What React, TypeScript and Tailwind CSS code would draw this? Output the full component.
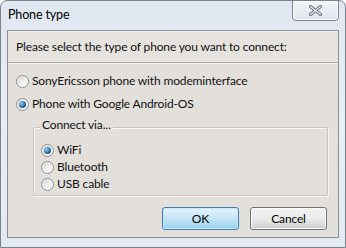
import React from "react";

function Radio({ checked }: { checked?: boolean }) {
  return (
    <span className="relative inline-flex w-[13px] h-[13px] shrink-0 rounded-full border border-[#8e8f8f] bg-gradient-to-br from-[#c9c9c9] via-[#eeeeee] to-[#ffffff] items-center justify-center shadow-[inset_0_0_0_1px_#f4f4f4]">
      {checked && (
        <span className="w-[7px] h-[7px] rounded-full bg-[radial-gradient(circle_at_35%_35%,#9fd3f2_0%,#2a6a9c_55%,#123d63_100%)]" />
      )}
    </span>
  );
}

function Option({ label, checked }: { label: string; checked?: boolean }) {
  return (
    <div className="flex items-center gap-[3px] h-[16px]">
      <Radio checked={checked} />
      <span className="leading-none">{label}</span>
    </div>
  );
}

export default function App() {
  return (
    <div
      className="relative w-[346px] h-[248px] overflow-hidden rounded-t-[7px] border border-[#7b828c] bg-gradient-to-b from-[#dfe7f0] via-[#e9eef5] to-[#e3e9f2] text-[12px] tracking-[-0.15px] text-[#111]"
      style={{ fontFamily: 'Lato, "Noto Sans", sans-serif' }}
    >
      <div className="h-[29px] flex items-center pl-[7px] text-[12.5px] text-black">
        Phone type
      </div>
      <div className="absolute right-[6px] top-[-1px] w-[47px] h-[21px] rounded-b-[4px] border border-[#7d8590] bg-gradient-to-b from-[#f2f5f9] to-[#dfe5ed] flex items-center justify-center shadow-[inset_0_0_0_1px_#fbfcfe]">
        <svg width="13" height="11" viewBox="0 0 13 11">
          <path
            d="M1.5 1.5 L11.5 9.5 M11.5 1.5 L1.5 9.5"
            stroke="#5f6670"
            strokeWidth="3"
            strokeLinecap="round"
          />
          <path
            d="M1.5 1.5 L11.5 9.5 M11.5 1.5 L1.5 9.5"
            stroke="#f4f6f8"
            strokeWidth="1.2"
            strokeLinecap="round"
          />
        </svg>
      </div>
      <div className="mx-[6px] h-[208px] border border-[#8a8f96] bg-[#e3e0dc] flex flex-col">
        <div className="h-[32px] shrink-0 border-b border-[#a9a6a2] bg-[#e6e3df] flex items-center pl-[8px] shadow-[inset_0_1px_0_#f3f1ee]">
          Please select the type of phone you want to connect:
        </div>
        <div className="border-t border-[#f6f5f3] flex flex-col pl-[8px] pt-[9px] gap-[7px]">
          <Option label="SonyEricsson phone with modeminterface" />
          <Option label="Phone with Google Android-OS" checked />
        </div>
        <div className="relative mt-[15px] ml-[25px] mr-[10px] h-[69px] border border-[#c9c6c2] rounded-[2px] shadow-[1px_1px_0_#f8f7f5,inset_1px_1px_0_#f8f7f5]">
          <span className="absolute left-[6px] top-[-9px] px-[2px] bg-[#e3e0dc] leading-none">
            Connect via...
          </span>
          <div className="flex flex-col pl-[7px] pt-[14px] gap-[1px]">
            <Option label="WiFi" checked />
            <Option label="Bluetooth" />
            <Option label="USB cable" />
          </div>
        </div>
        <div className="flex justify-end gap-[11px] mt-[11px] mr-[11px]">
          <button className="w-[77px] h-[23px] rounded-[3px] border border-[#3c7fb1] bg-gradient-to-b from-[#e5f4fc] via-[#c4e5f6] to-[#98d1ef] shadow-[inset_0_0_0_1px_#cbe9f8] text-black leading-none">
            OK
          </button>
          <button className="w-[77px] h-[23px] rounded-[3px] border border-[#707070] bg-gradient-to-b from-[#f2f2f2] via-[#ebebeb] to-[#cfcfcf] shadow-[inset_0_0_0_1px_#fbfbfb] text-black leading-none">
            Cancel
          </button>
        </div>
      </div>
    </div>
  );
}
